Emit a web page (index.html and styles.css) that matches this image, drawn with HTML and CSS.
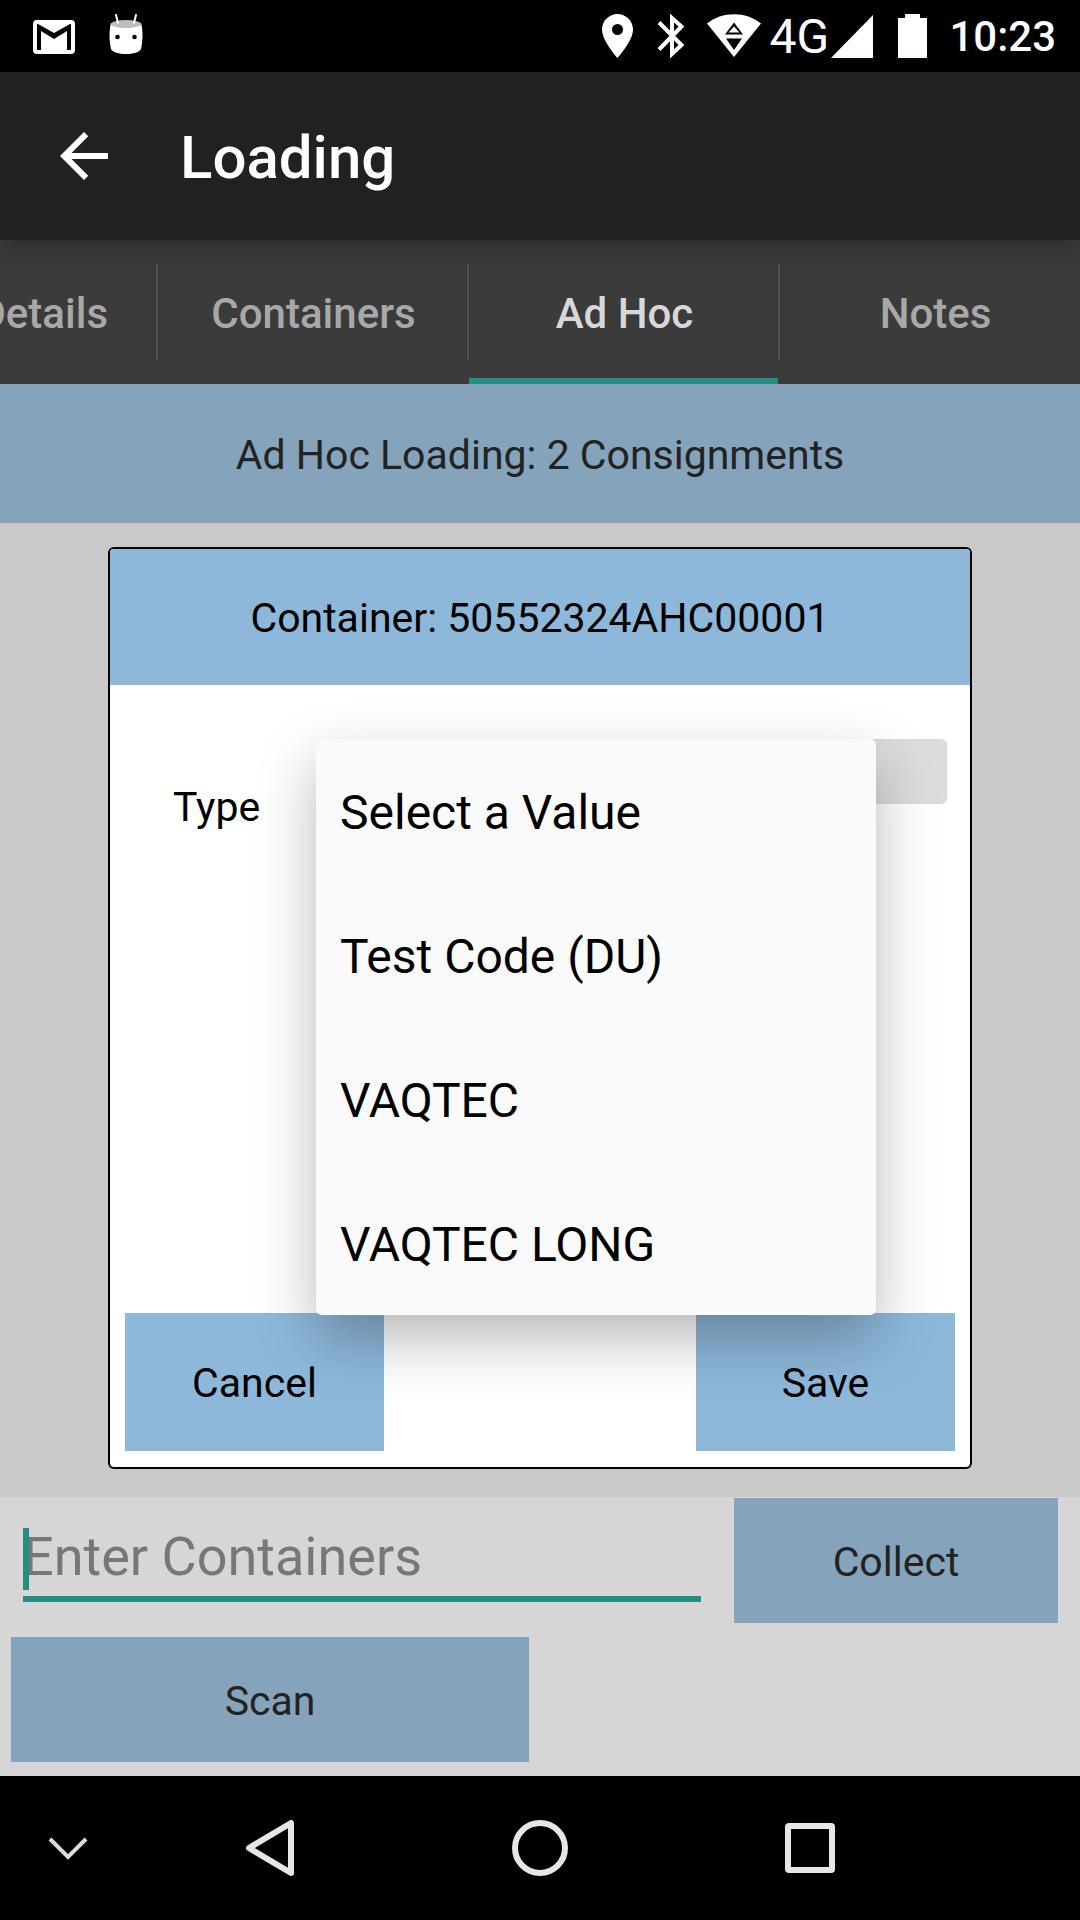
FILE: index.html
```html
<!DOCTYPE html>
<html lang="en">
<head>
<meta charset="utf-8">
<meta name="viewport" content="width=device-width, initial-scale=1">
<title>Loading</title>
<link rel="stylesheet" href="styles.css">
</head>
<body>
<div class="screen">
  <div class="status-bar">
    <div class="status-group status-notifications">
      <svg width="42" height="34" viewBox="0 0 42 34" aria-hidden="true"><rect width="42" height="34" rx="4" fill="#fff"/><path d="M4 4h1l16 9 16-9h1v26h-4V11l-13 8-13-8v19H4z" fill="#000"/></svg>
      <svg width="34" height="40" viewBox="0 0 34 40" aria-hidden="true"><path d="M2 9C0 16 0 26 2 35c1 3 8 5 15 5s14-2 15-5c2-9 2-19 0-26z" fill="#fff"/><ellipse cx="17" cy="10" rx="15" ry="4" fill="#bdbdbd"/><path d="M7 1l2 8M27 1l-2 8" stroke="#fff" stroke-width="2" stroke-linecap="round"/><circle cx="8.500" cy="23" r="2.300"/><circle cx="25.500" cy="23" r="2.300"/></svg>
    </div>
    <div class="status-group status-system">
      <svg class="icon-pin" width="31" height="44" viewBox="0 0 31 44" aria-hidden="true"><path fill="#fff" fill-rule="evenodd" d="M15.500 0C7 0 0 7 0 15.500 0 27 15.500 44 15.500 44S31 27 31 15.500C31 7 24 0 15.500 0zm0 10a5.500 5.500 0 1 1 0 11 5.500 5.500 0 0 1 0-11z"/></svg>
      <svg class="icon-bluetooth" width="28" height="44" viewBox="0 0 28 44" aria-hidden="true"><path d="M2 8.500l22.500 22.500L15 40V4l9.500 8.500L2 35.500" fill="none" stroke="#fff" stroke-width="4"/></svg>
      <svg class="icon-wifi" width="54" height="44" viewBox="0 0 54 44" aria-hidden="true"><path d="M0 9.500C15-3 39-3 54 9.500L27 43z" fill="#fff"/><path d="M27 8.500l9 12H18z"/><path d="M27 12.500l5.500 6h-11z" fill="#fff"/><path d="M19 24.500h16L27 36z"/></svg>
      <span class="network">4G</span>
      <svg class="icon-signal" width="42" height="43" viewBox="0 0 42 43" aria-hidden="true"><path d="M42 0v43H0z" fill="#fff"/></svg>
      <svg class="icon-battery" width="29" height="44" viewBox="0 0 29 44" aria-hidden="true"><path d="M7 0h15v4h7v40H0V4h7z" fill="#fff"/></svg>
      <time class="clock">10:23</time>
    </div>
  </div>

  <header class="app-bar">
    <button class="back" type="button" aria-label="Back"><svg width="72" height="72" viewBox="0 0 24 24" aria-hidden="true"><path fill="#fff" d="M20 11H7.830l5.590-5.590L12 4l-8 8 8 8 1.410-1.410L7.830 13H20z"/></svg></button>
    <h1 class="app-title">Loading</h1>
  </header>

  <nav class="tabs">
    <a class="tab tab-partial" href="#details">Details</a>
    <a class="tab" href="#containers">Containers</a>
    <a class="tab tab-active" href="#adhoc" aria-current="page">Ad Hoc</a>
    <a class="tab" href="#notes">Notes</a>
  </nav>

  <h2 class="summary">Ad Hoc Loading: 2 Consignments</h2>

  <main class="workspace">
    <section class="dialog" role="dialog" aria-labelledby="dialog-title">
      <h3 class="dialog-title" id="dialog-title">Container: 50552324AHC00001</h3>
      <div class="dialog-body">
        <label class="type-label" for="type">Type</label>
        <div class="type-field">
          <select class="spinner" id="type">
            <option></option>
          </select>
          <ul class="menu">
            <li><button class="menu-item" type="button">Select a Value</button></li>
            <li><button class="menu-item" type="button">Test Code (DU)</button></li>
            <li><button class="menu-item" type="button">VAQTEC</button></li>
            <li><button class="menu-item" type="button">VAQTEC LONG</button></li>
          </ul>
        </div>
      </div>
      <div class="dialog-actions">
        <button class="dialog-button" type="button">Cancel</button>
        <button class="dialog-button" type="button">Save</button>
      </div>
    </section>
  </main>

  <form class="entry">
    <div class="entry-row">
      <div class="entry-field">
        <input class="entry-input" type="text" placeholder="Enter Containers" aria-label="Enter Containers">
        <span class="caret"></span>
      </div>
      <button class="panel-button collect" type="button">Collect</button>
    </div>
    <button class="panel-button scan" type="button">Scan</button>
  </form>

  <div class="nav-bar">
    <button class="nav-button" type="button" aria-label="Hide keyboard"><svg width="42" height="26" viewBox="0 0 42 26" aria-hidden="true"><path d="M3 4l18 18L39 4" fill="none" stroke="#dcdcdc" stroke-width="4"/></svg></button>
    <button class="nav-button" type="button" aria-label="Back"><svg width="50" height="58" viewBox="0 0 50 58" aria-hidden="true"><path d="M46 4v50L4 29z" fill="none" stroke="#e6e6e6" stroke-width="6" stroke-linejoin="round"/></svg></button>
    <button class="nav-button" type="button" aria-label="Home"><svg width="56" height="56" viewBox="0 0 56 56" aria-hidden="true"><circle cx="28" cy="28" r="25" fill="none" stroke="#e6e6e6" stroke-width="6"/></svg></button>
    <button class="nav-button" type="button" aria-label="Recent apps"><svg width="50" height="50" viewBox="0 0 50 50" aria-hidden="true"><rect x="3" y="3" width="44" height="44" rx="1" fill="none" stroke="#e6e6e6" stroke-width="6" stroke-linejoin="round"/></svg></button>
  </div>
</div>
</body>
</html>
```
FILE: styles.css
```css
* {
  box-sizing: border-box;
}

body {
  margin: 0;
  font-family: Roboto, "Liberation Sans", sans-serif;
  font-size: 41px;
  line-height: 50px;
  color: #000;
}

h1, h2, h3, ul {
  margin: 0;
  padding: 0;
  font-weight: 400;
}

button, input, select {
  margin: 0;
  padding: 0;
  border: 0;
  border-radius: 0;
  background: none;
  color: inherit;
  font: inherit;
}

svg {
  display: block;
}

.screen {
  display: flex;
  flex-direction: column;
  min-height: 100vh;
  overflow: hidden;
  background: #c9c9c9;
}

/* Status bar */
.status-bar {
  display: flex;
  justify-content: space-between;
  align-items: center;
  height: 72px;
  padding: 0 24px 0 33px;
  background: #000;
  color: #fff;
}

.status-group {
  display: flex;
  align-items: center;
}

.status-notifications {
  gap: 34px;
  align-items: flex-end;
  padding-bottom: 5px;
}

.icon-pin {
  margin-right: 24px;
}

.icon-bluetooth {
  margin-right: 22px;
}

.icon-wifi {
  margin-right: 8px;
}

.network {
  width: 62px;
  padding-top: 2px;
  font-size: 48px;
}

.icon-battery {
  margin: 0 22px 0 25px;
}

.clock {
  padding-top: 2px;
  font-size: 42px;
  font-weight: 500;
}

/* App bar */
.app-bar {
  position: relative;
  z-index: 1;
  display: flex;
  align-items: center;
  gap: 60px;
  height: 168px;
  padding: 0 48px;
  background: #212121;
  box-shadow: 0 4px 24px rgba(0, 0, 0, 0.3);
  color: #fff;
}

.app-title {
  padding-top: 4px;
  font-size: 60px;
  line-height: 72px;
  font-weight: 500;
}

.tabs {
  display: grid;
  grid-template-columns: 158px repeat(3, minmax(0, 1fr));
  height: 144px;
  margin-right: -11px;
  background: #3b3b3b;
}

.tab {
  display: flex;
  justify-content: center;
  align-items: center;
  padding-top: 4px;
  background: linear-gradient(#505050, #505050) right center / 2px 96px no-repeat;
  color: #a8a8a8;
  font-size: 42px;
  font-weight: 500;
  text-decoration: none;
}

.tab:last-child {
  background: none;
}

.tab-partial {
  justify-content: flex-end;
  padding-right: 50px;
  overflow: hidden;
}

.tab-active {
  background:
    linear-gradient(#505050, #505050) right center / 2px 96px no-repeat,
    linear-gradient(#248d80, #248d80) left bottom / calc(100% - 2px) 6px no-repeat;
  color: #d8d8d8;
}

.summary {
  padding: 46px 24px 43px;
  background: #86a3bc;
  color: #222;
  font-size: 41px;
  text-align: center;
}

/* Dialog */
.workspace {
  display: flex;
  flex: 1;
  padding: 24px 10% 28px;
}

.dialog {
  display: flex;
  flex: 1;
  flex-direction: column;
  border: 2px solid #000;
  border-radius: 6px;
  background: #fff;
}

.dialog-title {
  padding: 44px 24px 42px;
  border-radius: 3px 3px 0 0;
  background: #8db8da;
  font-size: 41px;
  text-align: center;
}

.dialog-body {
  display: flex;
  flex: 1;
  align-items: flex-start;
  padding: 54px 23px 0 63px;
}

.type-label {
  flex: 0 0 143px;
  padding-top: 43px;
}

.type-field {
  position: relative;
  flex: 1;
}

.spinner {
  display: block;
  width: 100%;
  height: 65px;
  border-radius: 6px;
  background: #dcdcdc;
  appearance: none;
}

.menu {
  position: absolute;
  top: 0;
  left: 0;
  width: 560px;
  border-radius: 6px;
  background: #fafafa;
  box-shadow: 0 24px 60px rgba(0, 0, 0, 0.28);
  list-style: none;
}

.menu-item {
  display: block;
  width: 100%;
  height: 144px;
  padding: 4px 24px 0;
  font-size: 48px;
  text-align: left;
}

.dialog-actions {
  display: flex;
  justify-content: space-between;
  padding: 16px 15px;
}

.dialog-button {
  width: 259px;
  height: 138px;
  padding-top: 2px;
  background: #8db8da;
}

/* Container entry */
.entry {
  display: flex;
  flex-direction: column;
  gap: 14px;
  padding: 1px 22px 14px 11px;
  background: #d6d6d6;
}

.entry-row {
  display: flex;
  align-items: flex-start;
  gap: 33px;
  padding-left: 12px;
}

.entry-field {
  position: relative;
  flex: 1;
  padding-top: 30px;
}

.entry-input {
  display: block;
  width: 100%;
  height: 74px;
  padding-bottom: 12px;
  border-bottom: 6px solid #248d80;
  font-size: 54px;
  outline: 0;
}

.entry-input::placeholder {
  color: #777;
  opacity: 1;
}

.caret {
  position: absolute;
  top: 30px;
  left: 0;
  width: 6px;
  height: 62px;
  background: #248d80;
}

.panel-button {
  height: 125px;
  padding-top: 2px;
  background: #86a3bc;
  color: #222;
}

.collect {
  width: 324px;
}

.scan {
  width: 518px;
}

/* System navigation */
.nav-bar {
  display: grid;
  grid-template-columns: 1fr 2fr 2fr 2fr 1fr;
  height: 144px;
  background: #000;
}

.nav-button {
  display: flex;
  justify-content: center;
  align-items: center;
}
```
